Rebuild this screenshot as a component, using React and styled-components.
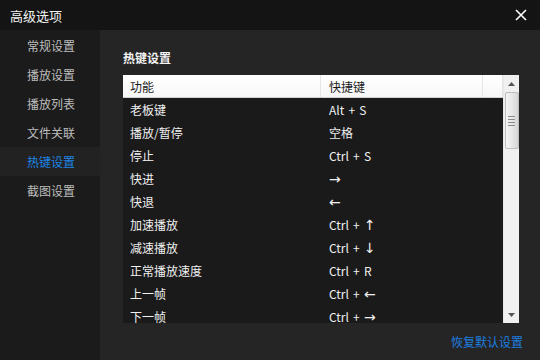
import React from "react";
import styled, { createGlobalStyle } from "styled-components";

const Global = createGlobalStyle`
  html, body { margin: 0; padding: 0; background: #252525; }
  body { font-family: "Noto Sans CJK SC", "Liberation Sans", sans-serif; }
  * { box-sizing: border-box; }
`;

const Window = styled.div`
  width: 540px;
  height: 360px;
  display: flex;
  flex-direction: column;
  background: #252525;
  overflow: hidden;
`;

const TitleBar = styled.div`
  height: 30px;
  flex: 0 0 30px;
  background: #141414;
  display: flex;
  align-items: center;
  justify-content: space-between;
  padding: 0 12px 0 10px;
`;

const Title = styled.div`
  color: #f2f2f2;
  font-size: 13px;
`;

const Close = styled.button`
  background: none;
  border: 0;
  padding: 0;
  width: 14px;
  height: 14px;
  display: flex;
  color: #fff;
`;

const Body = styled.div`
  flex: 1;
  display: flex;
  min-height: 0;
`;

const Sidebar = styled.div`
  width: 100px;
  background: #1b1b1b;
  display: flex;
  flex-direction: column;
  padding-top: 1px;
`;

const NavItem = styled.div`
  height: 29px;
  display: flex;
  align-items: center;
  padding-left: 27px;
  font-size: 12px;
  color: ${p => (p.$active ? "#1d86e8" : "#bdbdbd")};
  background: ${p => (p.$active ? "#222222" : "transparent")};
`;

const Main = styled.div`
  flex: 1;
  display: flex;
  flex-direction: column;
  padding: 18px 21px 0 23px;
`;

const Heading = styled.div`
  color: #f4f4f4;
  font-size: 12px;
  font-weight: bold;
  height: 20px;
  line-height: 20px;
  margin-bottom: 7px;
`;

const Table = styled.div`
  height: 248px;
  display: flex;
  background: #1a1a1a;
`;

const TableMain = styled.div`
  flex: 1;
  display: flex;
  flex-direction: column;
  overflow: hidden;
`;

const HeaderRow = styled.div`
  height: 23px;
  flex: 0 0 23px;
  display: grid;
  grid-template-columns: 198px 162px 1fr;
  background: linear-gradient(#ffffff, #f7f7f7);
  border-bottom: 1px solid #d0d0d0;
`;

const HeaderCell = styled.div`
  display: flex;
  align-items: center;
  padding-left: ${p => (p.$second ? "8px" : "7px")};
  font-size: 12px;
  color: #1a1a1a;
  border-right: 1px solid #e6e6e6;
`;

const Row = styled.div`
  height: 23px;
  flex: 0 0 23px;
  display: grid;
  grid-template-columns: 198px 162px 1fr;
`;

const Cell = styled.div`
  display: flex;
  align-items: center;
  padding-left: ${p => (p.$second ? "8px" : "7px")};
  font-size: 12px;
  color: #f0f0f0;
  white-space: pre;
  word-spacing: 1.5px;
`;

const ArrowGlyph = styled.span`
  font-family: "DejaVu Sans", sans-serif;
  font-size: 14px;
  line-height: 1;
  color: #f0f0f0;
`;

const ScrollBar = styled.div`
  width: 16px;
  background: #f0f0f0;
  display: flex;
  flex-direction: column;
  align-items: center;
  border-left: 1px solid #e8e8e8;
`;

const Arrow = styled.div`
  height: 17px;
  flex: 0 0 17px;
  display: flex;
  align-items: center;
  justify-content: center;
`;

const Thumb = styled.div`
  width: 14px;
  height: 57px;
  border: 1px solid #bdbdbd;
  border-radius: 2px;
  background: linear-gradient(90deg, #f4f4f4, #e4e4e4 60%, #d6d6d6);
  display: flex;
  flex-direction: column;
  align-items: center;
  justify-content: center;
  gap: 2px;
`;

const Grip = styled.div`
  width: 7px;
  height: 1px;
  background: #8a8a8a;
`;

const Spacer = styled.div`
  flex: 1;
`;

const Footer = styled.div`
  flex: 1;
  display: flex;
  align-items: center;
  justify-content: flex-end;
  margin-right: -4px;
`;

const Link = styled.a`
  color: #1d7fe0;
  font-size: 12px;
  text-decoration: none;
  cursor: pointer;
`;

const rows = [
  ["老板键", "Alt + S"],
  ["播放/暂停", "空格"],
  ["停止", "Ctrl + S"],
  ["快进", "", "→"],
  ["快退", "", "←"],
  ["加速播放", "Ctrl + ", "↑"],
  ["减速播放", "Ctrl + ", "↓"],
  ["正常播放速度", "Ctrl + R"],
  ["上一帧", "Ctrl + ", "←"],
  ["下一帧", "Ctrl + ", "→"],
];

const nav = ["常规设置", "播放设置", "播放列表", "文件关联", "热键设置", "截图设置"];

export default function App() {
  return (
    <>
      <Global />
      <Window>
        <TitleBar>
          <Title>高级选项</Title>
          <Close aria-label="close">
            <svg width="14" height="14" viewBox="0 0 14 14">
              <path d="M2 2L12 12M12 2L2 12" stroke="#fff" strokeWidth="1.6" />
            </svg>
          </Close>
        </TitleBar>
        <Body>
          <Sidebar>
            {nav.map(n => (
              <NavItem key={n} $active={n === "热键设置"}>{n}</NavItem>
            ))}
          </Sidebar>
          <Main>
            <Heading>热键设置</Heading>
            <Table>
              <TableMain>
                <HeaderRow>
                  <HeaderCell>功能</HeaderCell>
                  <HeaderCell $second>快捷键</HeaderCell>
                  <HeaderCell />
                </HeaderRow>
                {rows.map(([a, b, arrow]) => (
                  <Row key={a}>
                    <Cell>{a}</Cell>
                    <Cell $second>
                      {b}
                      {arrow && <ArrowGlyph>{arrow}</ArrowGlyph>}
                    </Cell>
                    <Cell />
                  </Row>
                ))}
              </TableMain>
              <ScrollBar>
                <Arrow>
                  <svg width="7" height="4" viewBox="0 0 7 4"><path d="M3.5 0L7 4H0Z" fill="#555" /></svg>
                </Arrow>
                <Thumb>
                  <Grip /><Grip /><Grip /><Grip />
                </Thumb>
                <Spacer />
                <Arrow>
                  <svg width="7" height="4" viewBox="0 0 7 4"><path d="M0 0H7L3.5 4Z" fill="#555" /></svg>
                </Arrow>
              </ScrollBar>
            </Table>
            <Footer>
              <Link>恢复默认设置</Link>
            </Footer>
          </Main>
        </Body>
      </Window>
    </>
  );
}
